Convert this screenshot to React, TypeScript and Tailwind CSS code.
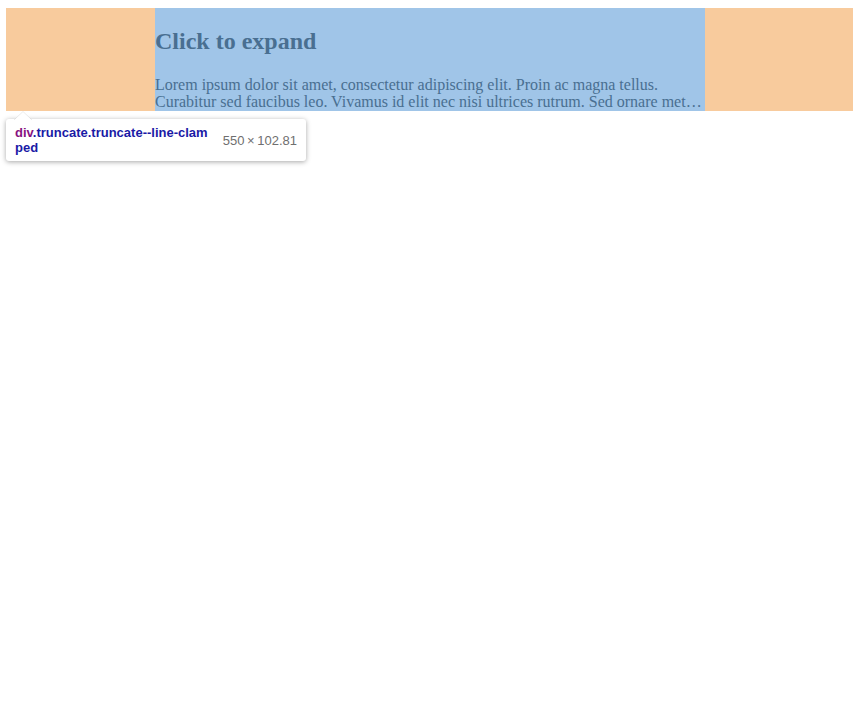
import React from "react";

export default function App() {
  const lorem =
    "Lorem ipsum dolor sit amet, consectetur adipiscing elit. Proin ac magna tellus. Curabitur sed faucibus leo. Vivamus id elit nec nisi ultrices rutrum. Sed ornare metus eget ligula dictum, vitae feugiat nisl tincidunt. Integer quis lectus at enim tempus posuere.";
  return (
    <div className="relative min-h-[701px] w-[857px] bg-white pl-[6px] pt-[8px]">
      <div className="flex h-[102.81px] w-[847px] bg-[#f8cb9d]">
        <div className="ml-[149px] h-[102.81px] w-[550px] bg-[#a0c5e8] text-[#496f91] [font-family:'Liberation_Serif',serif]">
          <h2 className="pt-[20px] text-[24px] font-bold leading-[27.5px]">Click to expand</h2>
          <p className="mt-[20px] line-clamp-2 text-[16px] leading-[17.65px]">{lorem}</p>
        </div>
      </div>
      <div className="absolute left-[6px] top-[119px] flex h-[42px] w-[300px] items-center justify-between rounded-[3px] bg-white px-[9px] shadow-[0_1px_5px_rgba(0,0,0,0.35)] [font-family:'Liberation_Sans',Arial,sans-serif]">
        <div className="text-[13px] font-bold leading-[15px] text-[#1a1aa6]">
          <span className="text-[#881280]">div</span>.truncate.truncate--line-clam
          <br />
          ped
        </div>
        <div className="whitespace-nowrap text-[13px] leading-[15px] text-[#6f6f6f]">{"550\u2009×\u2009102.81"}</div>
      </div>
      <svg className="absolute left-[14px] top-[111px]" width="18" height="9" viewBox="0 0 18 9">
        <path d="M0 9 L9 0.5 L18 9 Z" fill="#ffffff" />
        <path d="M0 9 L9 0.5 L18 9" fill="none" stroke="rgba(0,0,0,0.08)" strokeWidth="1" />
      </svg>
    </div>
  );
}
